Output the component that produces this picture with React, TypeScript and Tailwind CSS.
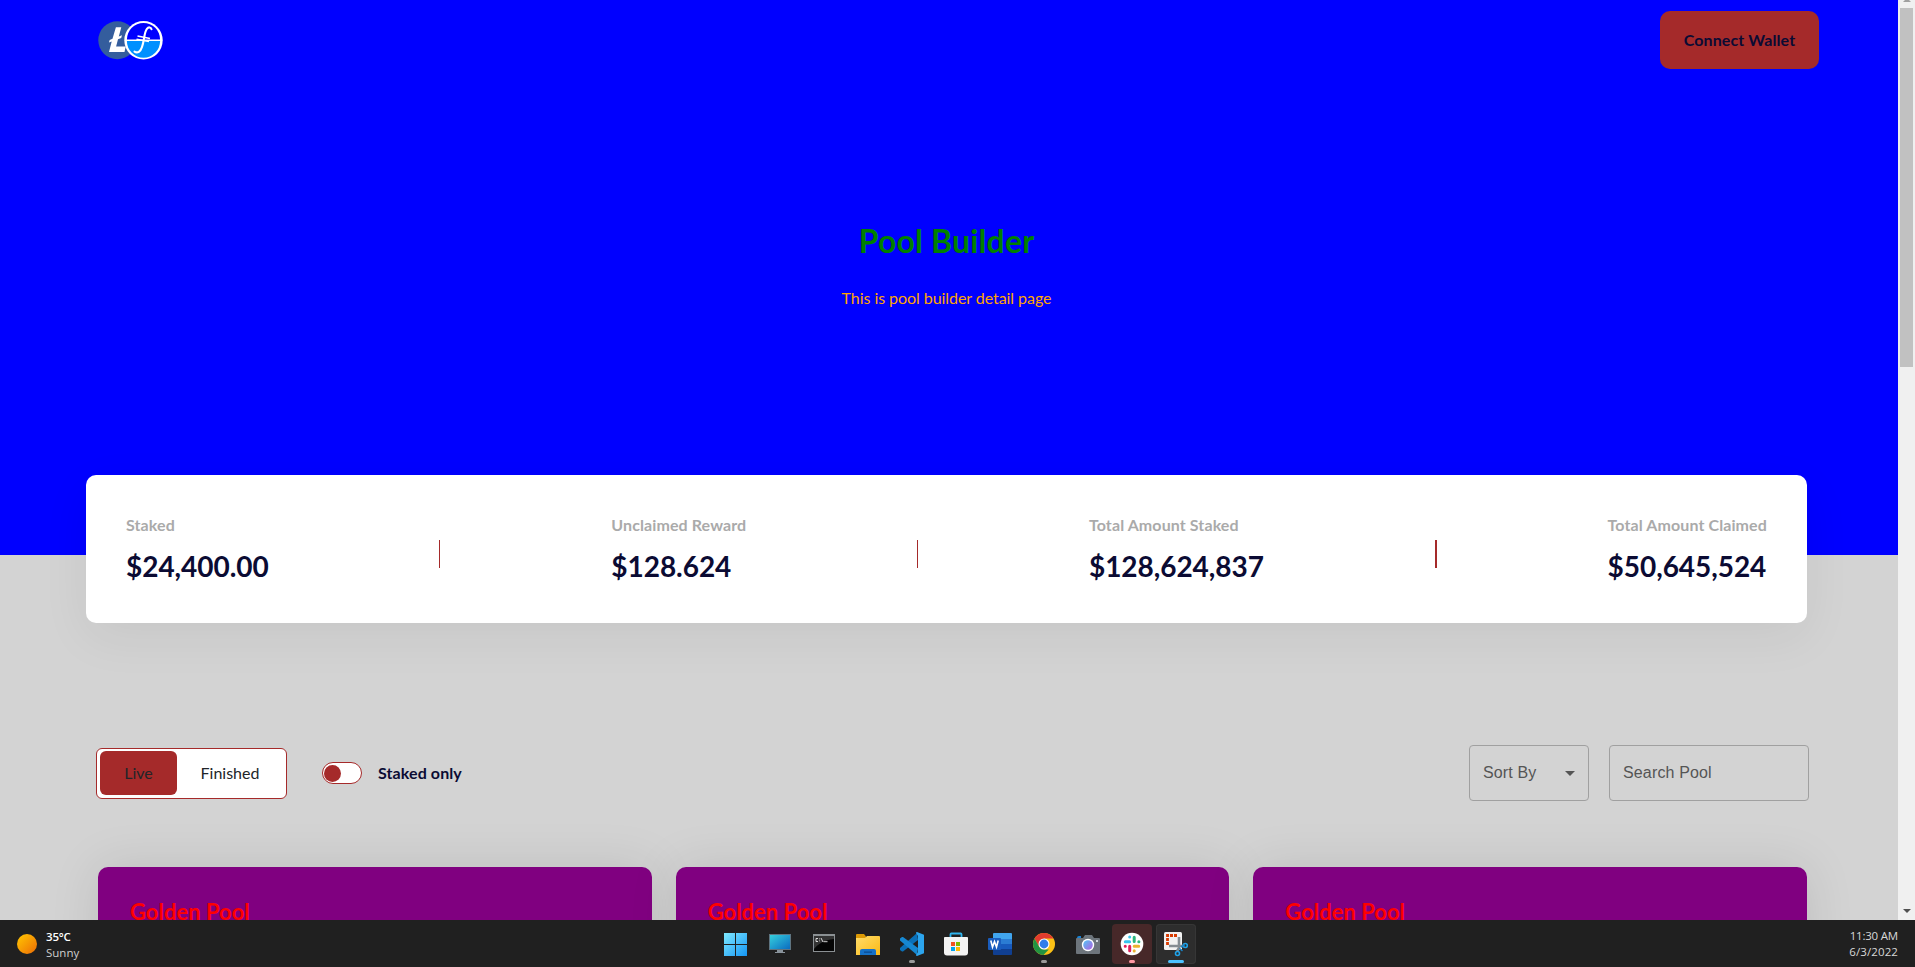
import React from "react";

const stats = [
  { label: "Staked", value: "$24,400.00", divider: "" },
  { label: "Unclaimed Reward", value: "$128.624", divider: "w-px" },
  { label: "Total Amount Staked", value: "$128,624,837", divider: "w-px" },
  { label: "Total Amount Claimed", value: "$50,645,524", divider: "w-0.5" },
];

const pools = ["Golden Pool", "Golden Pool", "Golden Pool"];

function Logo() {
  return (
    <svg width="66" height="40" viewBox="0 0 66 40" className="block">
      <circle cx="19.3" cy="20.3" r="19" fill="#345d9d" />
      <path
        d="M17.9 7.2h5.400l-2.500 9.400 3.200-1.300-.8 2.600-3.200 1.300-1.900 7.200h9.600l-1.200 5.600H11l2.700-10.600-2.800 1.100.8-2.600 2.800-1.100z"
        fill="#fff"
      />
      <circle cx="45.5" cy="20.3" r="19.200" fill="#fff" />
      <path d="M28.9 19.500a16.600 16.600 0 0 1 33.200 0z" fill="#0000ff" />
      <path d="M28.9 21.100a16.600 16.600 0 0 0 33.200 0z" fill="#0090ff" />
      <path
        d="M53.500 9.200c-.6-2.200-3-2.400-4.600-.4C46 12.500 46.500 20 44 27c-1.400 4.600-4.500 6.600-7.500 4.600"
        fill="none"
        stroke="#fff"
        strokeWidth="2.100"
        strokeLinecap="round"
      />
      <path d="M39.500 16l12.500 2.600M38.500 19.200l12.500 2.400" stroke="#fff" strokeWidth="1.500" />
    </svg>
  );
}

function Header() {
  return (
    <header className="flex h-[80px] items-start justify-between pl-[98px] pr-[79px]">
      <div className="pt-5">
        <Logo />
      </div>
      <button className="mt-[11px] h-[58px] w-[159px] rounded-[10px] bg-[#a52a2a] pb-px text-base font-bold tracking-[0.1px] text-[#0b0b33]">
        Connect Wallet
      </button>
    </header>
  );
}

function StatsCard() {
  return (
    <section className="relative -mt-20 ml-[86px] flex h-[148px] w-[1721px] items-center justify-between rounded-[10px] bg-white px-10 pb-0.5 shadow-[0_14px_50px_rgba(0,0,0,0.06)]">
      {stats.map((s) => (
        <React.Fragment key={s.label}>
          {s.divider && <span className={"mt-3 h-7 bg-[#a52a2a] " + s.divider} />}
          <div className="flex flex-col">
            <span className="text-base leading-6 font-bold tracking-[0.1px] text-[#aaaaaa]">{s.label}</span>
            <span className="mt-3 text-[28px] leading-[34px] font-bold tracking-[-0.05px] text-[#0b0b33]">
              {s.value}
            </span>
          </div>
        </React.Fragment>
      ))}
    </section>
  );
}

function Controls() {
  return (
    <section className="mt-[122px] flex h-14 items-center justify-between pl-[96px] pr-[89px]">
      <div className="flex items-center">
        <div className="flex h-[51px] w-[191px] rounded-[6px] border border-[#a52a2a] bg-white py-[2px] pl-[3px]">
          <button className="h-[44px] w-[77px] rounded-[6px] bg-[#a52a2a] text-base text-[#212529]">Live</button>
          <button className="h-[44px] w-[106px] text-base text-[#212529]">Finished</button>
        </div>
        <div className="ml-[35px] flex h-[22px] w-[40px] items-center rounded-full border border-[#a52a2a] bg-white pl-px">
          <span className="size-[17px] rounded-full bg-[#a52a2a]" />
        </div>
        <span className="ml-4 text-base font-bold tracking-[0.1px] text-[#0b0b33]">Staked only</span>
      </div>
      <div className="flex gap-5 font-['Liberation_Sans',sans-serif] text-base tracking-[0.15px] text-[#555555]">
        <div className="flex h-14 w-[120px] items-center justify-between rounded-[4px] border border-[#a0a0a0] pl-[13px] pr-[13px]">
          <span>Sort By</span>
          <svg width="10" height="5" viewBox="0 0 10 5">
            <path d="M0 0h10L5 5z" fill="#555" />
          </svg>
        </div>
        <div className="flex h-14 w-[200px] items-center rounded-[4px] border border-[#a0a0a0] pl-[13px]">
          <span>Search Pool</span>
        </div>
      </div>
    </section>
  );
}

function Scrollbar() {
  return (
    <div className="flex h-[920px] w-[17px] shrink-0 flex-col items-center bg-[#f0f0f0]">
      <svg width="8" height="2" viewBox="0 0 8 2" className="block">
        <path d="M2 0h4l2 2H0z" fill="#a0a0a0" />
      </svg>
      <div className="mt-[6px] h-[359px] w-[13px] bg-[#c1c1c1]" />
      <svg width="8" height="4" viewBox="0 0 8 4" className="mt-auto mb-[7px] block">
        <path d="M0 0h8L4 4z" fill="#505050" />
      </svg>
    </div>
  );
}

function WindowsIcon() {
  return (
    <svg width="24" height="24" viewBox="0 0 24 24">
      <defs>
        <linearGradient id="win" x1="0" y1="0" x2="1" y2="1" gradientUnits="objectBoundingBox">
          <stop offset="0" stopColor="#7fe9ff" />
          <stop offset="1" stopColor="#1496f5" />
        </linearGradient>
      </defs>
      <path d="M0 1h11v11H0zM12 1h11v11H12zM0 13h11v11H0zM12 13h11v11H12z" fill="url(#win)" />
    </svg>
  );
}

function MonitorIcon() {
  return (
    <svg width="24" height="24" viewBox="0 0 24 24">
      <defs>
        <linearGradient id="mon" x1="0" y1="0" x2="1" y2="1">
          <stop offset="0" stopColor="#35cfdc" />
          <stop offset="1" stopColor="#0b6cc0" />
        </linearGradient>
      </defs>
      <path d="M9 18h6v2h2v1H7v-1h2z" fill="#8a949c" />
      <path d="M1 2h22v16H1z" fill="#5f7480" />
      <path d="M2 3h20v14H2z" fill="url(#mon)" />
    </svg>
  );
}

function TerminalIcon() {
  return (
    <svg width="24" height="24" viewBox="0 0 24 24">
      <path d="M1 2h22v18H1z" fill="#8b9093" />
      <path d="M2 4h20v15H2z" fill="#050505" />
      <path d="M2 4h20v3C12 8 6 12 2 17z" fill="#333" />
      <path
        d="M6 6.500H4v3h2M7.500 6.500v.8M7.500 8.500v.8M9 6l2 4M11.500 9.700h4"
        stroke="#e8e8e8"
        strokeWidth=".9"
        fill="none"
      />
    </svg>
  );
}

function FolderIcon() {
  return (
    <svg width="24" height="24" viewBox="0 0 24 24">
      <defs>
        <linearGradient id="fold" x1="0" y1="0" x2="1" y2="1">
          <stop offset="0" stopColor="#ffdc6b" />
          <stop offset="1" stopColor="#fbb914" />
        </linearGradient>
      </defs>
      <path d="M0 2.500Q0 2 1 2h7l2 2.500V9H0z" fill="#dd9a05" />
      <path d="M0 6h9l2-2h12q1 0 1 1v18H0z" fill="url(#fold)" />
      <path d="M4 23v-4q0-2 2-2h12q2 0 2 2v4z" fill="#1571c8" />
      <path d="M8 19.500h8v1.300H8z" fill="#0a4b91" />
    </svg>
  );
}

function CodeIcon() {
  return (
    <svg width="24" height="24" viewBox="0 0 24 24">
      <path d="M17 1L0 16v2l2 1.500h1L18 8z" fill="#0a70b8" />
      <path d="M17 23L0 8.500v-2L2 5h1l15 11z" fill="#1688d2" />
      <path d="M17 0l7 2.800v18.400L17 24q-1 0-1-1l2-3V4l-2-3q0-1 1-1z" fill="#2ca5ee" />
    </svg>
  );
}

function StoreIcon() {
  return (
    <svg width="24" height="24" viewBox="0 0 24 24">
      <path d="M6.500 6V2.300q0-.8.800-.8h9.400q.8 0 .8.800V6" fill="none" stroke="#2fb4ee" strokeWidth="1.800" />
      <path d="M0 5.500Q0 5 .8 5h22.400q.8 0 .8.800V20.500q0 3-3 3H3q-3 0-3-3z" fill="#f3f3f3" />
      <path d="M7 10h4v4H7z" fill="#f25022" />
      <path d="M12 10h4v4h-4z" fill="#7fba00" />
      <path d="M7 15h4v4H7z" fill="#00a4ef" />
      <path d="M12 15h4v4h-4z" fill="#ffb900" />
    </svg>
  );
}

function WordIcon() {
  return (
    <svg width="24" height="24" viewBox="0 0 24 24">
      <path d="M5 2q0-1 1-1h17q1 0 1 1v5H5z" fill="#41a5ee" />
      <path d="M5 7h19v5H5z" fill="#2b7cd3" />
      <path d="M5 12h19v5H5z" fill="#185abd" />
      <path d="M5 17h19v5q0 1-1 1H6q-1 0-1-1z" fill="#103f91" />
      <rect x="0" y="6" width="13" height="12" rx="1" fill="#1a5dbe" />
      <path d="M2.800 8.500l1.700 6.500L6.500 9.500l2 5.500 1.700-6.500" fill="none" stroke="#fff" strokeWidth="1.600" />
    </svg>
  );
}

function ChromeIcon() {
  return (
    <svg width="24" height="24" viewBox="0 0 24 24">
      <circle cx="12" cy="12" r="11" fill="#fbc116" />
      <path d="M2.500 6.500A11 11 0 0 1 21.500 6.500H12L7.200 14.700z" fill="#e33b2e" />
      <path d="M2.500 6.500L7.200 14.700 12 17.500h4.800L11.500 23A11 11 0 0 1 2.500 6.500z" fill="#229342" />
      <circle cx="12" cy="12" r="5.500" fill="#fff" />
      <circle cx="12" cy="12" r="4.400" fill="#2f7de9" />
    </svg>
  );
}

function CameraIcon() {
  return (
    <svg width="24" height="24" viewBox="0 0 24 24">
      <defs>
        <linearGradient id="lens" x1="0" y1="0" x2="1" y2="1">
          <stop offset="0" stopColor="#51c7f5" />
          <stop offset="1" stopColor="#b45ee0" />
        </linearGradient>
      </defs>
      <path d="M1 6q0-2 2-2h2v3H1z" fill="#1683d8" />
      <path d="M0 7q0-1 1-1h6l2-3h7l2 3h5q1 0 1 1v14q0 1-1 1H1q-1 0-1-1z" fill="#6d757c" />
      <circle cx="12" cy="13" r="6.200" fill="#fff" />
      <circle cx="12" cy="13" r="4.800" fill="url(#lens)" />
      <path d="M20 8h2v2h-2z" fill="#cfd6dc" />
    </svg>
  );
}

function SlackIcon() {
  return (
    <svg width="24" height="24" viewBox="0 0 24 24">
      <circle cx="12" cy="12" r="11.300" fill="#fff" />
      <g strokeWidth="3" strokeLinecap="round">
        <path d="M5.300 9.700h4.300M9.700 5v.1" stroke="#36c5f0" />
        <path d="M14.200 5.300v4.300M18.800 9.700h.1" stroke="#2eb67d" />
        <path d="M14.200 14.200h4.500M14.200 18.800v.1" stroke="#ecb22e" />
        <path d="M9.700 14.200v4.500M5.200 14.200h.1" stroke="#e01e5a" />
      </g>
    </svg>
  );
}

function SnipIcon() {
  return (
    <svg width="24" height="25" viewBox="0 0 24 25">
      <rect x="0" y="0" width="18" height="18" rx="1.500" fill="#f2f2f2" />
      <path d="M3.500 13V3.500H13" fill="none" stroke="#d83b01" strokeWidth="2.800" strokeDasharray="3 1" />
      <path d="M15 5v11l-2 3M5 14h11l4 0" fill="none" stroke="#858c92" strokeWidth="2.600" />
      <circle cx="21.300" cy="13.500" r="2" fill="none" stroke="#1fa3ea" strokeWidth="1.600" />
      <circle cx="13.500" cy="21.500" r="2" fill="none" stroke="#1fa3ea" strokeWidth="1.600" />
      <path d="M15.500 16.500l3 2.500M17 15l3.500-2" stroke="#1683c8" strokeWidth="1.500" />
    </svg>
  );
}

const tasks = [
  { name: "start", icon: <WindowsIcon />, tile: "", dot: "" },
  { name: "desktop", icon: <MonitorIcon />, tile: "", dot: "" },
  { name: "terminal", icon: <TerminalIcon />, tile: "", dot: "" },
  { name: "files", icon: <FolderIcon />, tile: "", dot: "" },
  { name: "code", icon: <CodeIcon />, tile: "", dot: "w-1.5 bg-[#9a9a9a]" },
  { name: "store", icon: <StoreIcon />, tile: "", dot: "" },
  { name: "word", icon: <WordIcon />, tile: "", dot: "" },
  { name: "chrome", icon: <ChromeIcon />, tile: "", dot: "w-1.5 bg-[#9a9a9a]" },
  { name: "camera", icon: <CameraIcon />, tile: "", dot: "" },
  { name: "slack", icon: <SlackIcon />, tile: "bg-[#472829]", dot: "w-1.5 bg-[#ff99a4]" },
  { name: "snip", icon: <SnipIcon />, tile: "bg-[#2d2d2d] ring-1 ring-inset ring-[#363636]", dot: "w-4 bg-[#4cc2ff]" },
];

function Taskbar() {
  return (
    <footer className="grid h-[47px] grid-cols-[716px_480px_1fr] bg-[#202020] font-['Open_Sans','Noto_Sans',sans-serif]">
      <div className="flex pl-[17px]">
        <span className="mt-[14px] size-5 rounded-full bg-linear-to-br from-[#ffc800] to-[#ea6a05]" />
        <div className="ml-[9px] flex flex-col pt-[9px] text-[11.5px] leading-4">
          <span className="font-semibold tracking-[-0.2px] text-white">35°C</span>
          <span className="text-[#cfcfcf]">Sunny</span>
        </div>
      </div>
      <div className="flex gap-1 pt-1">
        {tasks.map((t) => (
          <div key={t.name} className={"flex h-10 w-10 shrink-0 flex-col items-center rounded-[4px] pt-2 " + t.tile}>
            <div className="h-[25px]">{t.icon}</div>
            {t.dot && <span className={"mt-[3px] h-[3px] rounded-full " + t.dot} />}
          </div>
        ))}
      </div>
      <div className="flex flex-col items-end pt-2 pr-[17px] text-[11.5px] leading-4 text-[#d8d8d8]">
        <span className="tracking-[-0.2px]">11:30 AM</span>
        <span className="tracking-[0.1px]">6/3/2022</span>
      </div>
    </footer>
  );
}

export default function App() {
  return (
    <div className="flex h-[967px] w-[1915px] flex-col overflow-hidden font-['Lato',sans-serif]">
      <div className="flex h-[920px] overflow-hidden">
        <main className="h-[920px] w-[1898px] overflow-hidden bg-[#d3d3d3]">
          <div className="h-[555px] bg-[#0000ff]">
            <Header />
            <div className="flex w-[1893px] flex-col items-center pt-[141px]">
              <h1 className="text-[32px] leading-10 font-bold tracking-[0.15px] text-[#008000]">Pool Builder</h1>
              <p className="mt-[25px] text-base leading-6 tracking-[-0.06px] text-[#ffa500]">
                This is pool builder detail page
              </p>
            </div>
          </div>
          <StatsCard />
          <Controls />
          <section className="mt-[66px] flex gap-6 pl-[98px]">
            {pools.map((name, i) => (
              <article
                key={i}
                className="h-[400px] w-[553.670px] shrink-0 rounded-[10px] bg-[#800080] pt-[30px] pl-8 shadow-[0_0_50px_rgba(0,0,0,0.1)]"
              >
                <h2 className="text-[22px] leading-[30px] font-bold text-[#ff0000]">{name}</h2>
              </article>
            ))}
          </section>
        </main>
        <Scrollbar />
      </div>
      <Taskbar />
    </div>
  );
}
